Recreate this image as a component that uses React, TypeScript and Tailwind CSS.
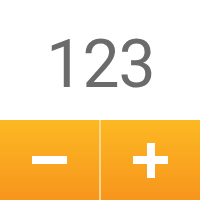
import React from "react";

export default function App() {
  return (
    <div className="w-[200px] h-[200px] bg-white flex flex-col" style={{ fontFamily: "Roboto, sans-serif" }}>
      <div className="h-[120px] flex items-center justify-center">
        <span className="text-[66px] leading-none tracking-[-1px] text-[#6b6b6b] mt-[9px] ml-[1px]" style={{ fontFamily: "Roboto, sans-serif" }}>123</span>
      </div>
      <div className="flex-1 flex bg-gradient-to-b from-[#fcb823] to-[#f7951d]">
        <div className="flex-1 flex items-center justify-center">
          <div className="w-[35px] h-[8px] bg-white" />
        </div>
        <div className="w-[2px] bg-[#fdd58a]" />
        <div className="flex-1 flex items-center justify-center">
          <div className="relative w-[35px] h-[35px]">
            <div className="absolute left-0 top-[13.5px] w-[35px] h-[8px] bg-white" />
            <div className="absolute top-0 left-[13.5px] w-[8px] h-[35px] bg-white" />
          </div>
        </div>
      </div>
    </div>
  );
}
